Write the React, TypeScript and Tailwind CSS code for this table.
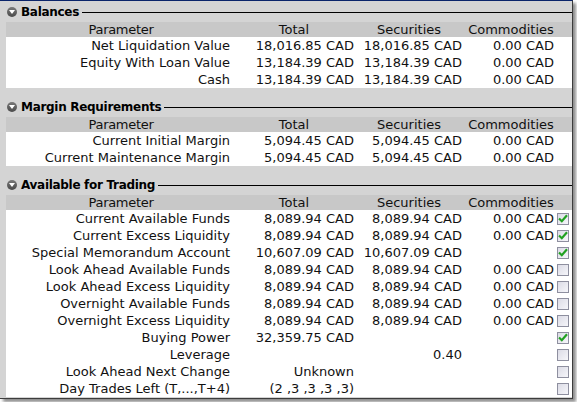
const font = { fontFamily: '"DejaVu Sans", Verdana, sans-serif' }

type Row = {
  label: string
  total?: string
  securities?: string
  commodities?: string
  check?: boolean | null
}

const balances: Row[] = [
  { label: 'Net Liquidation Value', total: '18,016.85 CAD', securities: '18,016.85 CAD', commodities: '0.00 CAD' },
  { label: 'Equity With Loan Value', total: '13,184.39 CAD', securities: '13,184.39 CAD', commodities: '0.00 CAD' },
  { label: 'Cash', total: '13,184.39 CAD', securities: '13,184.39 CAD', commodities: '0.00 CAD' },
]

const margin: Row[] = [
  { label: 'Current Initial Margin', total: '5,094.45 CAD', securities: '5,094.45 CAD', commodities: '0.00 CAD' },
  { label: 'Current Maintenance Margin', total: '5,094.45 CAD', securities: '5,094.45 CAD', commodities: '0.00 CAD' },
]

const trading: Row[] = [
  { label: 'Current Available Funds', total: '8,089.94 CAD', securities: '8,089.94 CAD', commodities: '0.00 CAD', check: true },
  { label: 'Current Excess Liquidity', total: '8,089.94 CAD', securities: '8,089.94 CAD', commodities: '0.00 CAD', check: true },
  { label: 'Special Memorandum Account', total: '10,607.09 CAD', securities: '10,607.09 CAD', check: true },
  { label: 'Look Ahead Available Funds', total: '8,089.94 CAD', securities: '8,089.94 CAD', commodities: '0.00 CAD', check: false },
  { label: 'Look Ahead Excess Liquidity', total: '8,089.94 CAD', securities: '8,089.94 CAD', commodities: '0.00 CAD', check: false },
  { label: 'Overnight Available Funds', total: '8,089.94 CAD', securities: '8,089.94 CAD', commodities: '0.00 CAD', check: false },
  { label: 'Overnight Excess Liquidity', total: '8,089.94 CAD', securities: '8,089.94 CAD', commodities: '0.00 CAD', check: false },
  { label: 'Buying Power', total: '32,359.75 CAD', check: true },
  { label: 'Leverage', securities: '0.40', check: false },
  { label: 'Look Ahead Next Change', total: 'Unknown', check: false },
  { label: 'Day Trades Left (T,...,T+4)', total: '(2 ,3 ,3 ,3 ,3)', check: false },
]

const CheckBox = ({ checked }: { checked: boolean }) => (
  <div className="flex h-[12px] w-[12px] items-center justify-center border border-[#8e8f9f] bg-gradient-to-br from-[#dcdce6] to-[#f6f6fa]">
    {checked && (
      <svg width="10" height="9" viewBox="0 0 10 9">
        <path d="M1 4.5 L3.8 7.2 L9 1.2" fill="none" stroke="#21a121" strokeWidth="2.2" />
      </svg>
    )}
  </div>
)

const Section = ({ title, rows, checks }: { title: string; rows: Row[]; checks?: boolean }) => (
  <div className="mb-[9px]">
    <div className="flex h-[20px] items-center">
      <div className="ml-[1px] flex h-[10px] w-[10px] items-center justify-center rounded-full bg-gradient-to-b from-[#7a7a7a] to-[#4a4a4a]">
        <svg width="6" height="4" viewBox="0 0 6 4">
          <path d="M0 0 L6 0 L3 4 Z" fill="#fff" />
        </svg>
      </div>
      <span className="ml-[4px] text-[12px] font-bold tracking-[-0.3px] text-black">{title}</span>
      <div className="ml-[3px] h-px flex-1 bg-black" />
    </div>
    <div className="flex h-[15px] items-center bg-[#c8c8c8] text-[13px] leading-none text-[#111]">
      <div className="w-[230px] text-center tracking-[-0.3px]">Parameter</div>
      <div className="w-[116px] text-center">Total</div>
      <div className="w-[114px] text-center">Securities</div>
      <div className="w-[90px] text-center">Commodities</div>
    </div>
    <div className="bg-white text-[13px] text-[#111]">
      {rows.map((r) => (
        <div key={r.label} className="flex h-[17px] items-center whitespace-nowrap">
          <div className="w-[230px] pr-[6px] text-right">{r.label}</div>
          <div className="w-[118px] text-right">{r.total}</div>
          <div className="w-[112px] pr-[4px] text-right">{r.securities}</div>
          <div className="w-[90px] pr-[2px] text-right">{r.commodities}</div>
          {checks && (
            <div className="flex flex-1 justify-end pr-[3px]">
              <CheckBox checked={!!r.check} />
            </div>
          )}
        </div>
      ))}
    </div>
  </div>
)

export default function App() {
  return (
    <div className="h-[402px] w-[577px] bg-white" style={font}>
      <div className="h-[399px] w-[573px] overflow-hidden border-t border-r border-b border-t-[#0a246a] border-r-[#3c3c3c] border-b-[#3c3c3c] bg-[#d4d4d4] pt-[1px] pl-[6px] shadow-[3px_3px_3px_rgba(0,0,0,0.45)]">
        <Section title="Balances" rows={balances} />
        <Section title="Margin Requirements" rows={margin} />
        <Section title="Available for Trading" rows={trading} checks />
      </div>
    </div>
  )
}
